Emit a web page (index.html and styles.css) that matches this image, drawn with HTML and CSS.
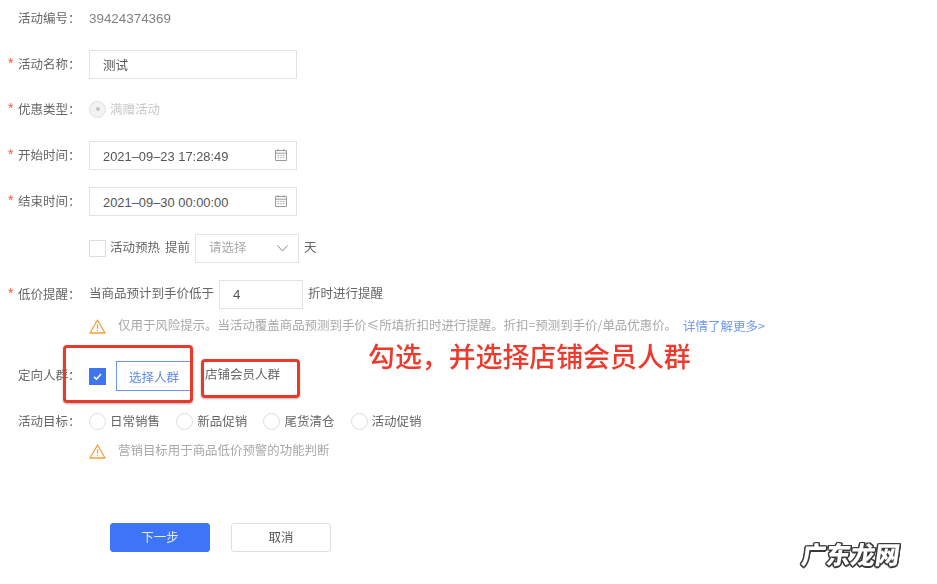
FILE: index.html
```html
<!DOCTYPE html>
<html lang="zh-CN">
<head>
<meta charset="utf-8">
<title>活动设置</title>
<link rel="stylesheet" href="styles.css">
</head>
<body>
<main class="page">
  <form class="form">
    <div class="row gap-16">
      <span class="label">活动编号：</span>
      <span class="num value">39424374369</span>
    </div>
    <div class="row gap-15">
      <span class="label required">活动名称：</span>
      <div class="field wide"><span class="field-text">测试</span></div>
    </div>
    <div class="row gap-16">
      <span class="label required">优惠类型：</span>
      <span class="radio disabled"><i class="dot"></i></span>
      <span class="muted radio-text">满赠活动</span>
    </div>
    <div class="row gap-16">
      <span class="label required">开始时间：</span>
      <div class="field wide between"><span class="num date">2021–09–23 17:28:49</span>
        <svg class="cal" viewBox="0 0 14 14"><path d="M1.5 2.5h11v10h-11zM1.5 5.2h11M4 1v2.4M10 1v2.4M3.5 7.3h1.4M6.3 7.3h1.4M9.1 7.3h1.4M3.5 9.8h1.4M6.3 9.8h1.4M9.1 9.8h1.4" fill="none" stroke="#9a9a9a" stroke-width="1"/></svg>
      </div>
    </div>
    <div class="row gap-17">
      <span class="label required">结束时间：</span>
      <div class="field wide between"><span class="num date">2021–09–30 00:00:00</span>
        <svg class="cal" viewBox="0 0 14 14"><path d="M1.5 2.5h11v10h-11zM1.5 5.2h11M4 1v2.4M10 1v2.4M3.5 7.3h1.4M6.3 7.3h1.4M9.1 7.3h1.4M3.5 9.8h1.4M6.3 9.8h1.4M9.1 9.8h1.4" fill="none" stroke="#9a9a9a" stroke-width="1"/></svg>
      </div>
    </div>
    <div class="row gap-16">
      <span class="label"></span>
      <span class="check"></span>
      <span class="check-text">活动预热</span>
      <span class="before-select">提前</span>
      <div class="field select between"><span class="placeholder">请选择</span>
        <svg class="chev" viewBox="0 0 11 7"><path d="M.5.5 5.500 6 10.500.5" fill="none" stroke="#8a8a8a" stroke-width="1"/></svg>
      </div>
      <span class="after-select">天</span>
    </div>
    <div class="row gap-2">
      <span class="label required">低价提醒：</span>
      <span class="lead">当商品预计到手价低于</span>
      <div class="field small"><span class="num small-value">4</span></div>
      <span class="after-small">折时进行提醒</span>
    </div>
    <div class="row gap-20">
      <span class="label"></span>
      <svg class="warn" viewBox="0 0 17 15"><path d="M8.500 1 16 14H1z" fill="none" stroke="#f0a040" stroke-width="1.300" stroke-linejoin="round"/><path d="M8.500 5.200v4.600M8.500 10.900v1.300" stroke="#f0a040" stroke-width="1.300"/></svg>
      <span class="note">仅用于风险提示。当活动覆盖商品预测到手价≤所填折扣时进行提醒。折扣=预测到手价/单品优惠价。</span>
      <a class="link">详情了解更多&gt;</a>
    </div>
    <div class="row gap-15">
      <span class="label lift">定向人群：</span>
      <span class="check checked"><svg viewBox="0 0 17 17"><path d="M5 8.800 7.500 11.200 12 6" fill="none" stroke="#fff" stroke-width="1.600"/></svg></span>
      <span class="pick">选择人群</span>
      <span class="picked">店铺会员人群</span>
    </div>
    <div class="row">
      <span class="label">活动目标：</span>
      <div class="options">
        <span class="option"><span class="radio"></span><span class="option-text">日常销售</span></span>
        <span class="option"><span class="radio"></span><span class="option-text">新品促销</span></span>
        <span class="option"><span class="radio"></span><span class="option-text">尾货清仓</span></span>
        <span class="option"><span class="radio"></span><span class="option-text">活动促销</span></span>
      </div>
    </div>
    <div class="row gap-57">
      <span class="label"></span>
      <svg class="warn" viewBox="0 0 17 15"><path d="M8.500 1 16 14H1z" fill="none" stroke="#f0a040" stroke-width="1.300" stroke-linejoin="round"/><path d="M8.500 5.200v4.600M8.500 10.900v1.300" stroke="#f0a040" stroke-width="1.300"/></svg>
      <span class="note">营销目标用于商品低价预警的功能判断</span>
    </div>
    <div class="actions">
      <span class="btn primary"><span class="btn-text">下一步</span></span>
      <span class="btn"><span class="btn-text">取消</span></span>
    </div>
  </form>
  <span class="mark mark-a"></span>
  <span class="mark mark-b"></span>
  <span class="annotation">勾选，并选择店铺会员人群</span>
  <span class="watermark">广东龙网</span>
</main>
</body>
</html>
```
FILE: styles.css
```css
* { box-sizing: border-box; }
html, body { margin: 0; background: #fff; }
.page {
  position: relative;
  width: 937px;
  height: 584px;
  overflow: hidden;
  font-family: "Noto Sans CJK SC", "Liberation Sans", sans-serif;
  font-size: 12.500px;
  color: #666;
  filter: blur(0.45px);
}
.form { display: flex; flex-direction: column; padding-top: 3px; }
.row { display: flex; align-items: center; height: 30px; white-space: nowrap; }
.gap-2 { margin-bottom: 2px; }
.gap-15 { margin-bottom: 15px; }
.gap-16 { margin-bottom: 16px; }
.gap-17 { margin-bottom: 17px; }
.gap-20 { margin-bottom: 20px; }
.gap-57 { margin-bottom: 57px; }
.label { position: relative; width: 89px; padding-left: 18px; flex: none; margin-bottom: 2px; }
.lift { margin-bottom: 4px; }
.required::before {
  content: "*";
  position: absolute;
  left: 8px;
  top: 1px;
  color: #f0553a;
  font-family: "Liberation Sans", sans-serif;
  font-size: 14px;
}
.num { font-family: "Liberation Sans", sans-serif; font-size: 13.400px; }
.value { color: #808080; }
.date { font-size: 12.900px; color: #555; margin-top: 2px; }
.field {
  display: flex;
  align-items: center;
  height: 29px;
  background: #fff;
  border: 1px solid #e2e2e2;
  color: #555;
}
.between { justify-content: space-between; }
.wide { width: 208px; padding: 0 8px 0 13px; }
.field-text { color: #555; }
.cal { width: 14px; height: 14px; }
.muted { color: #c8c8c8; }
.radio {
  display: flex;
  align-items: center;
  justify-content: center;
  flex: none;
  width: 17px;
  height: 17px;
  border: 1px solid #dcdcdc;
  border-radius: 50%;
  background: #fff;
}
.radio.disabled { background: #f3f3f4; }
.dot { width: 4px; height: 4px; border-radius: 50%; background: #c4c4c4; }
.radio-text { margin-left: 4px; margin-bottom: 2px; }
.check {
  display: block;
  flex: none;
  width: 17px;
  height: 17px;
  border: 1px solid #dedede;
  background: #fff;
}
.checked { border: 0; background: #3e74f0; }
.checked svg { display: block; width: 17px; height: 17px; }
.check-text { margin-left: 4px; margin-bottom: 3px; }
.before-select { margin-left: 5px; margin-bottom: 3px; }
.select { width: 104px; margin-left: 5px; padding: 0 10px 0 13px; }
.placeholder { color: #aaa; margin-bottom: 3px; }
.chev { width: 11px; height: 7px; }
.after-select { margin-left: 5px; margin-bottom: 3px; }
.lead { margin-bottom: 3px; }
.small { width: 84px; margin-left: 5px; padding-left: 13px; }
.small-value { color: #555; }
.after-small { margin-left: 5px; margin-bottom: 3px; }
.warn { width: 17px; height: 15px; flex: none; }
.note { margin-left: 12px; margin-bottom: 2px; color: #a8a8a8; font-size: 12.450px; }
.link { margin-left: 6px; margin-bottom: 2px; color: #6e97f2; font-size: 12.500px; }
.pick {
  display: flex;
  align-items: center;
  justify-content: center;
  width: 76px;
  height: 30px;
  margin-left: 10px;
  border: 1px solid #6d96f3;
  color: #5f8cf2;
}
.picked { margin-left: 13px; margin-bottom: 5px; color: #666; }
.options { display: flex; gap: 16.200px; }
.option { display: flex; align-items: center; gap: 4px; }
.option-text { margin-bottom: 2px; }
.actions { display: flex; gap: 21px; padding-left: 110px; }
.btn {
  display: flex;
  align-items: center;
  justify-content: center;
  width: 100px;
  height: 29px;
  border: 1px solid #dfdfdf;
  border-radius: 3px;
  background: #fff;
  color: #555;
}
.btn-text { margin-bottom: 2px; }
.primary { border-color: #3e74f7; background: #3e74f7; color: #e4ecfd; }
.mark {
  position: absolute;
  border: 3px solid #e9392c;
  border-radius: 4px;
  box-shadow: 0 1px 2px rgba(0, 0, 0, .3);
}
.mark-a { left: 63px; top: 345px; width: 130px; height: 58px; }
.mark-b { left: 201px; top: 359px; width: 99px; height: 39px; }
.annotation {
  position: absolute;
  left: 368px;
  top: 336px;
  color: #ee3a2c;
  font-size: 26.900px;
  font-weight: 500;
  line-height: 40px;
  white-space: nowrap;
}
.watermark {
  position: absolute;
  left: 802px;
  top: 536px;
  color: #fff;
  font-size: 24.500px;
  font-weight: 900;
  line-height: 36px;
  white-space: nowrap;
  transform: skewX(-8deg);
  text-shadow:
    1.500px 0 0 #3a3a3a, -1.500px 0 0 #3a3a3a, 0 1.500px 0 #3a3a3a, 0 -1.500px 0 #3a3a3a,
    1.200px 1.200px 0 #3a3a3a, -1.200px 1.200px 0 #3a3a3a, 1.200px -1.200px 0 #3a3a3a, -1.200px -1.200px 0 #3a3a3a;
}
```
